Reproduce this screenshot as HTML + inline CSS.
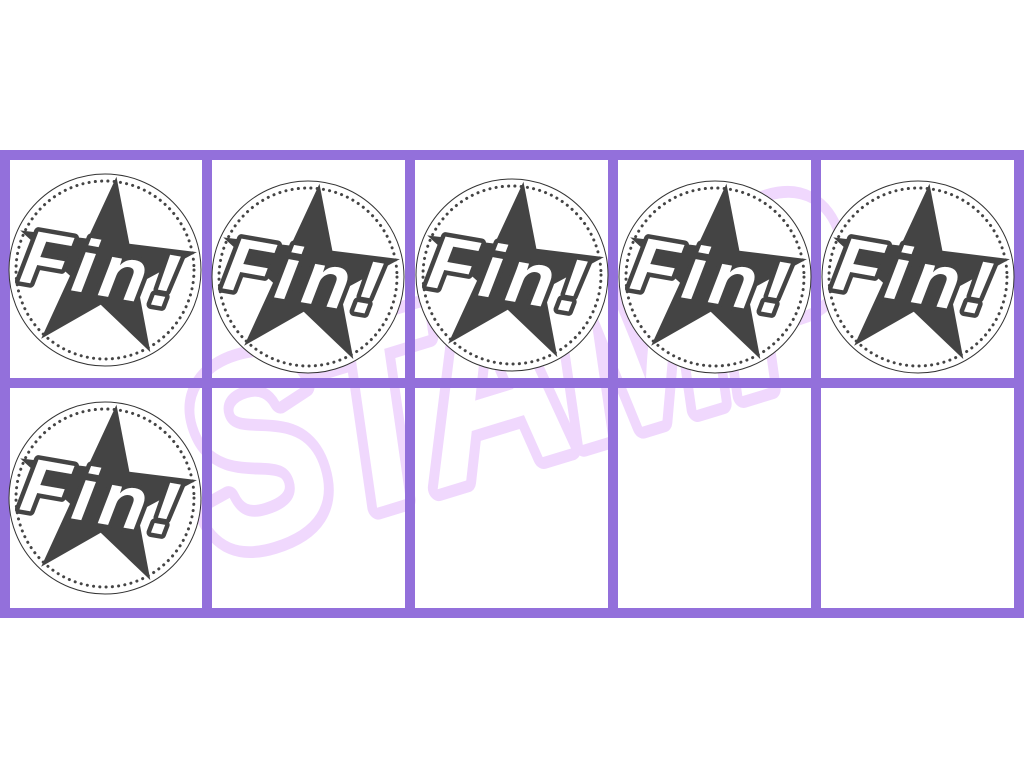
<!DOCTYPE html>
<html><head><style>html,body{margin:0;padding:0;background:#fff;width:1024px;height:768px;overflow:hidden}</style></head>
<body>
<svg width="1024" height="768" viewBox="0 0 1024 768" xmlns="http://www.w3.org/2000/svg">
<defs>
<g id="st">
<circle cx="0" cy="0" r="96" fill="#fff" stroke="#333" stroke-width="1"/>
<circle cx="0" cy="0" r="89" fill="none" stroke="#444" stroke-width="3" stroke-dasharray="0.1 6.2" stroke-linecap="round"/>
<polygon transform="rotate(7)" fill="#444" points="0,-94 21,-29 89,-29 34,10 55,76 0,35 -55,76 -34,10 -89,-29 -21,-29"/>
<g transform="rotate(10)">
<text x="-2" y="26" text-anchor="middle" font-family="Liberation Sans, sans-serif" font-weight="bold" font-style="italic" font-size="76" fill="#fff" stroke="#444" stroke-width="9" stroke-linejoin="round" paint-order="stroke" letter-spacing="6">Fin!</text>
</g>
</g>
</defs>
<rect x="0" y="150" width="1024" height="468" fill="#9370db"/>
<g fill="#fff">
<rect x="10" y="160" width="192" height="218"/><rect x="212" y="160" width="193" height="218"/><rect x="415" y="160" width="193" height="218"/><rect x="618" y="160" width="193" height="218"/><rect x="821" y="160" width="193" height="218"/>
<rect x="10" y="388" width="192" height="220"/><rect x="212" y="388" width="193" height="220"/><rect x="415" y="388" width="193" height="220"/><rect x="618" y="388" width="193" height="220"/><rect x="821" y="388" width="193" height="220"/>
</g>
<text transform="translate(540,458) rotate(-17) scale(0.8,1)" text-anchor="middle" font-family="Liberation Sans, sans-serif" font-weight="bold" font-style="italic" font-size="260" fill="#fff" stroke="#f0d8fd" stroke-width="24" stroke-linejoin="round" paint-order="stroke" letter-spacing="-8">STAMP</text>
<g fill="#9370db">
<rect x="0" y="150" width="1024" height="10"/><rect x="0" y="378" width="1024" height="10"/><rect x="0" y="608" width="1024" height="10"/>
<rect x="0" y="150" width="10" height="468"/><rect x="202" y="150" width="10" height="468"/><rect x="405" y="150" width="10" height="468"/><rect x="608" y="150" width="10" height="468"/><rect x="811" y="150" width="10" height="468"/><rect x="1014" y="150" width="10" height="468"/>
</g>
<use href="#st" transform="translate(105,270)"/>
<use href="#st" transform="translate(308,277)"/>
<use href="#st" transform="translate(512,275)"/>
<use href="#st" transform="translate(715,277)"/>
<use href="#st" transform="translate(918,277)"/>
<use href="#st" transform="translate(105,498)"/>
</svg>
</body></html>
